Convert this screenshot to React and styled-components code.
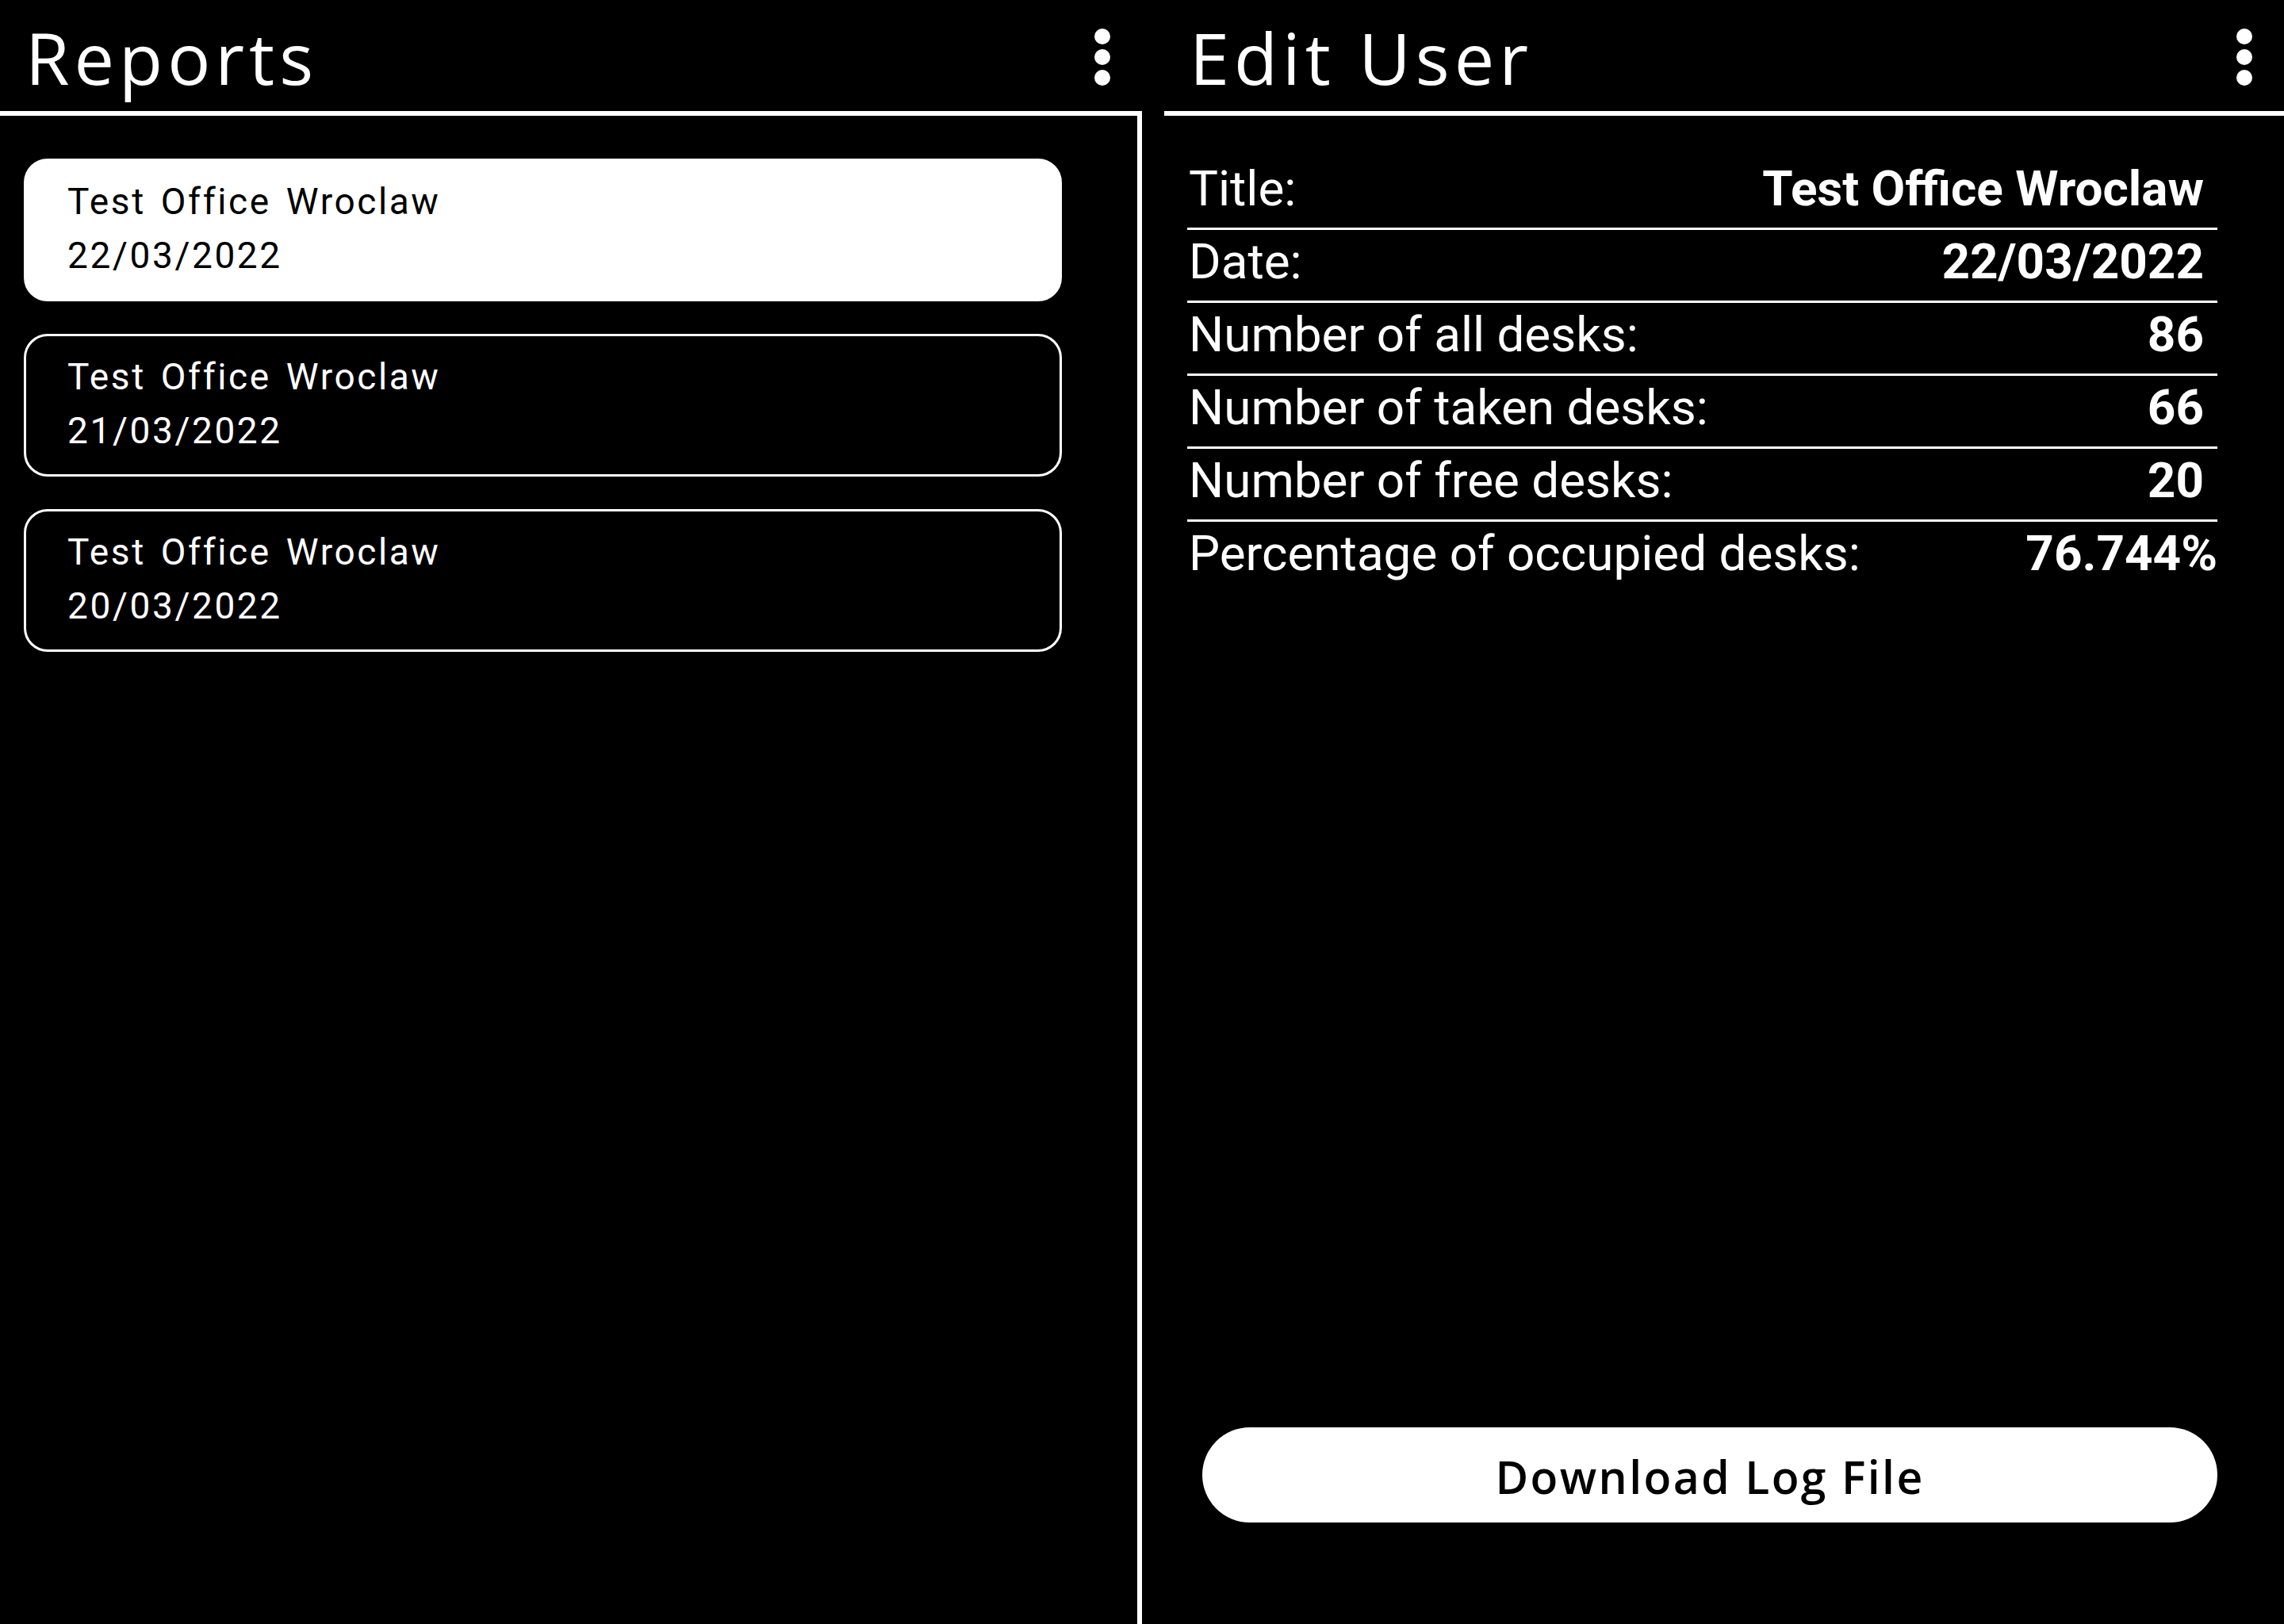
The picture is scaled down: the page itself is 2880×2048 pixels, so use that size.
import React from "react";
import styled, { createGlobalStyle } from "styled-components";

const GlobalStyle = createGlobalStyle`
  html, body {
    margin: 0;
    padding: 0;
    background: #000;
  }
  * { box-sizing: border-box; }
`;

const Page = styled.div`
  display: flex;
  gap: 28px;
  min-height: 2048px;
  background: #000;
  color: #fff;
`;

const Column = styled.section`
  display: flex;
  flex-direction: column;
  width: ${(p) => p.$width};
  flex: ${(p) => (p.$grow ? 1 : "none")};
`;

const Header = styled.header`
  height: 146px;
  display: flex;
  align-items: center;
  justify-content: space-between;
  padding: 4px 40px 0 32px;
  border-bottom: 6px solid #fff;
`;

const Heading = styled.h1`
  margin: 0;
  font-family: "Open Sans", "DejaVu Sans", sans-serif;
  font-weight: 400;
  font-size: 90px;
  letter-spacing: 6px;
  color: #fff;
  line-height: 1.2;
`;

const Kebab = styled.button`
  display: flex;
  flex-direction: column;
  gap: 6px;
  padding: 0;
  border: 0;
  background: transparent;
  cursor: pointer;
`;

const Dot = styled.span`
  width: 20px;
  height: 20px;
  border-radius: 50%;
  background: #fff;
`;

const ListBody = styled.div`
  flex: 1;
  border-right: 6px solid #fff;
  display: flex;
  flex-direction: column;
  gap: 41px;
  padding: 54px 95px 0 30px;
`;

const Card = styled.div`
  border: 3px solid #fff;
  border-radius: 30px;
  padding: 17px 52px 21px;
  background: ${(p) => (p.$active ? "#fff" : "#000")};
  color: ${(p) => (p.$active ? "#000" : "#fff")};
  font-family: Roboto, "Liberation Sans", sans-serif;
  font-size: 46px;
  line-height: 68px;
  letter-spacing: 2.6px;
  word-spacing: 5px;
  cursor: pointer;
`;

const CardLine = styled.div``;

const DetailBody = styled.div`
  flex: 1;
  display: flex;
  flex-direction: column;
  padding: 52px 84px 128px 29px;
`;

const Table = styled.div`
  display: flex;
  flex-direction: column;
`;

const Row = styled.div`
  display: flex;
  justify-content: space-between;
  align-items: baseline;
  padding: 3px ${(p) => (p.$last ? "0" : "17px")} 12px 2px;
  border-bottom: ${(p) => (p.$last ? "none" : "3px solid #fff")};
  font-family: Roboto, "Liberation Sans", sans-serif;
  font-size: 62px;
  line-height: 74px;
  color: #fff;
`;

const Label = styled.span`
  font-weight: 400;
`;

const Value = styled.span`
  font-weight: 700;
`;

const Spacer = styled.div`
  flex: 1;
`;

const DownloadButton = styled.button`
  margin-left: 19px;
  height: 120px;
  border: 0;
  border-radius: 60px;
  background: #fff;
  color: #000;
  font-family: "Open Sans", "DejaVu Sans", sans-serif;
  font-weight: 600;
  font-size: 57px;
  letter-spacing: 2.4px;
  padding-top: 4px;
  cursor: pointer;
`;

const reports = [
  { title: "Test Office Wroclaw", date: "22/03/2022", active: true },
  { title: "Test Office Wroclaw", date: "21/03/2022" },
  { title: "Test Office Wroclaw", date: "20/03/2022" },
];

const details = [
  ["Title:", "Test Office Wroclaw"],
  ["Date:", "22/03/2022"],
  ["Number of all desks:", "86"],
  ["Number of taken desks:", "66"],
  ["Number of free desks:", "20"],
  ["Percentage of occupied desks:", "76.744%"],
];

function Menu() {
  return (
    <Kebab aria-label="More options">
      <Dot />
      <Dot />
      <Dot />
    </Kebab>
  );
}

export default function App() {
  return (
    <>
      <GlobalStyle />
      <Page>
        <Column $width="1440px">
          <Header>
            <Heading>Reports</Heading>
            <Menu />
          </Header>
          <ListBody>
            {reports.map((r) => (
              <Card key={r.date} $active={r.active}>
                <CardLine>{r.title}</CardLine>
                <CardLine>{r.date}</CardLine>
              </Card>
            ))}
          </ListBody>
        </Column>
        <Column $grow>
          <Header>
            <Heading>Edit User</Heading>
            <Menu />
          </Header>
          <DetailBody>
            <Table>
              {details.map(([label, value], i) => (
                <Row key={label} $last={i === details.length - 1}>
                  <Label>{label}</Label>
                  <Value>{value}</Value>
                </Row>
              ))}
            </Table>
            <Spacer />
            <DownloadButton>Download Log File</DownloadButton>
          </DetailBody>
        </Column>
      </Page>
    </>
  );
}
